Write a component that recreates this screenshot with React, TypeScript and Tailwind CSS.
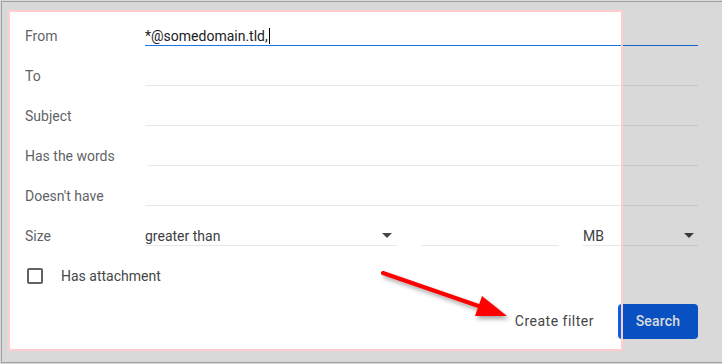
import React from 'react';

const Caret = () => (
  <svg width="10" height="5" viewBox="0 0 10 5" className="shrink-0">
    <path d="M0 0 L10 0 L5 5 Z" fill="#444746" />
  </svg>
);

const Row = ({ label, value, focused, offset }: { label: string; value?: string; focused?: boolean; offset?: boolean }) => (
  <div className="flex h-10 items-end">
    <div className="w-[120px] shrink-0 text-[14px] leading-5 text-[#5f6368]">{label}</div>
    <div
      className={
        'flex h-5 flex-1 items-center border-b text-[14px] leading-5 text-[#202124] ' +
        (focused ? 'border-[#1a73e8]' : 'border-[#e8e8e8]') +
        (offset ? ' ml-[3px]' : '')
      }
    >
      {value}
      {focused && <span className="ml-px inline-block h-[16px] w-px bg-black" />}
    </div>
  </div>
);

export default function App() {
  return (
    <div className="relative h-[364px] w-[722px] overflow-hidden bg-white font-['Roboto',sans-serif]">
      {/* dialog */}
      <div className="ml-px mt-px flex h-[362px] flex-col border-b border-l border-t border-[#bdbdbd] bg-white pl-[23px] pr-[24px] pt-[4px]">
        <Row label="From" value="*@somedomain.tld," focused />
        <Row label="To" />
        <Row label="Subject" />
        <Row label="Has the words" offset />
        <Row label="Doesn't have" />
        <div className="flex h-10 items-end">
          <div className="w-[120px] shrink-0 text-[14px] leading-5 text-[#5f6368]">Size</div>
          <div className="flex flex-1 gap-6">
            <div className="flex h-5 w-[252px] items-center justify-between border-b border-[#e8e8e8] pr-[5px] text-[14px] leading-5 text-[#3c4043]">
              greater than
              <Caret />
            </div>
            <div className="h-5 w-[138px] border-b border-[#e8e8e8]" />
            <div className="flex h-5 flex-1 items-center justify-between border-b border-[#e8e8e8] pr-[4px] text-[14px] leading-5 text-[#3c4043]">
              MB
              <Caret />
            </div>
          </div>
        </div>
        <div className="mt-5 flex h-5 items-center gap-[18px] pl-[2px]">
          <div className="h-4 w-4 rounded-[2px] border-2 border-[#5f6368]" />
          <span className="text-[14px] text-[#444746]">Has attachment</span>
        </div>
        <div className="mt-[18px] flex items-center justify-end gap-[24px]">
          <span className="text-[14px] tracking-[0.5px] text-[#444746]">Create filter</span>
          <button className="h-[35px] w-[80px] rounded-[4px] bg-[#0b5fe6] text-[14px] font-medium tracking-[0.2px] text-white">
            Search
          </button>
        </div>
      </div>
      <div className="pl-[60px] text-[14px] font-bold leading-none text-black">
        Unwanted messages from somedomain.tld go away.
      </div>

      {/* highlight overlay */}
      <div className="pointer-events-none absolute left-[8px] top-[10px] h-[341px] w-[615px] border-2 border-[#ffcdcd] shadow-[0_0_0_1000px_rgba(0,0,0,0.15)]" />

      {/* arrow */}
      <svg
        className="pointer-events-none absolute left-[370px] top-[258px] drop-shadow-[2px_3px_2px_rgba(0,0,0,0.35)]"
        width="150"
        height="70"
        viewBox="0 0 150 70"
      >
        <line x1="13" y1="15" x2="110" y2="48.5" stroke="#ff0000" strokeWidth="4" strokeLinecap="round" />
        <path d="M137 58 L105 58 L112 38 Z" fill="#ff0000" />
      </svg>
    </div>
  );
}
